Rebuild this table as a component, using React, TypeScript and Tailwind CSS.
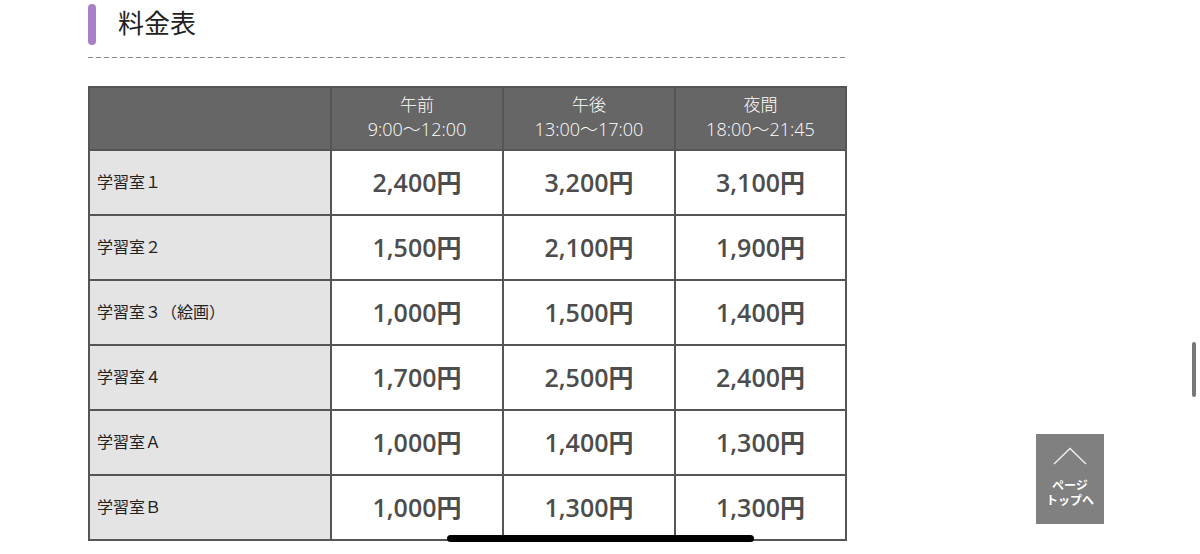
const font = { fontFamily: '"Liberation Sans", "Noto Sans CJK JP", sans-serif' }
const numFont = { fontFamily: '"Open Sans", "Noto Sans CJK JP", sans-serif' }

const periods = [
  { name: '午前', time: '9:00～12:00' },
  { name: '午後', time: '13:00～17:00' },
  { name: '夜間', time: '18:00～21:45' },
]

const rooms = [
  { name: '学習室１', prices: ['2,400円', '3,200円', '3,100円'] },
  { name: '学習室２', prices: ['1,500円', '2,100円', '1,900円'] },
  { name: '学習室３（絵画）', prices: ['1,000円', '1,500円', '1,400円'] },
  { name: '学習室４', prices: ['1,700円', '2,500円', '2,400円'] },
  { name: '学習室Ａ', prices: ['1,000円', '1,400円', '1,300円'] },
  { name: '学習室Ｂ', prices: ['1,000円', '1,300円', '1,300円'] },
]

function PageTop() {
  return (
    <div className="absolute left-[1036px] top-[434px] flex h-[90px] w-[68px] flex-col items-center bg-[#808080] pt-[13px]">
      <svg width="34" height="18" viewBox="0 0 34 18" fill="none">
        <path d="M1 17 L17 1.5 L33 17" stroke="#f2f2f2" strokeWidth="1.3" />
      </svg>
      <div className="mt-[14px] text-center text-[12px] font-bold leading-[15px] text-white">
        ページ
        <br />
        トップへ
      </div>
    </div>
  )
}

export default function App() {
  return (
    <div className="relative h-[554px] w-[1200px] overflow-hidden bg-white" style={font}>
      <div className="ml-[88px] w-[757px] pt-[4px]">
        <div className="flex items-center gap-[22px]">
          <div className="h-[41px] w-[8px] rounded-full bg-[#a880c8]" />
          <h2 className="text-[26px] leading-[41px] text-[#222]">料金表</h2>
        </div>
        <div className="mt-[12px] h-px bg-[repeating-linear-gradient(to_right,#8a8a8a_0_5px,transparent_5px_8px)]" />

        <table className="mt-[28px] w-[757px] table-fixed border-collapse border-2 border-[#555]">
          <colgroup>
            <col className="w-[242px]" />
            <col className="w-[172px]" />
            <col className="w-[172px]" />
            <col className="w-[171px]" />
          </colgroup>
          <thead>
            <tr className="h-[63px] bg-[#666]">
              <th className="border-2 border-[#555]" />
              {periods.map((p) => (
                <th
                  key={p.name}
                  className="border-2 border-[#555] pb-[3px] text-center font-light leading-[24px] text-white"
                  style={numFont}
                >
                  <div className="text-[17px]">{p.name}</div>
                  <div className="text-[18px]">{p.time}</div>
                </th>
              ))}
            </tr>
          </thead>
          <tbody>
            {rooms.map((r) => (
              <tr key={r.name} className="h-[65px]">
                <td className="border-2 border-[#555] bg-[#e4e4e4] pl-[7px] text-[16px] text-[#222]">
                  {r.name}
                </td>
                {r.prices.map((p, i) => (
                  <td
                    key={i}
                    className="border-2 border-[#555] text-center text-[25px] font-semibold text-[#4d4d4d]"
                    style={numFont}
                  >
                    {p}
                  </td>
                ))}
              </tr>
            ))}
          </tbody>
        </table>
      </div>

      <div className="absolute left-[1192px] top-[342px] h-[55px] w-[4px] rounded-full bg-[#777]" />
      <PageTop />
      <div className="absolute left-[447px] top-[535px] h-[7px] w-[307px] rounded-full bg-black" />
    </div>
  )
}
